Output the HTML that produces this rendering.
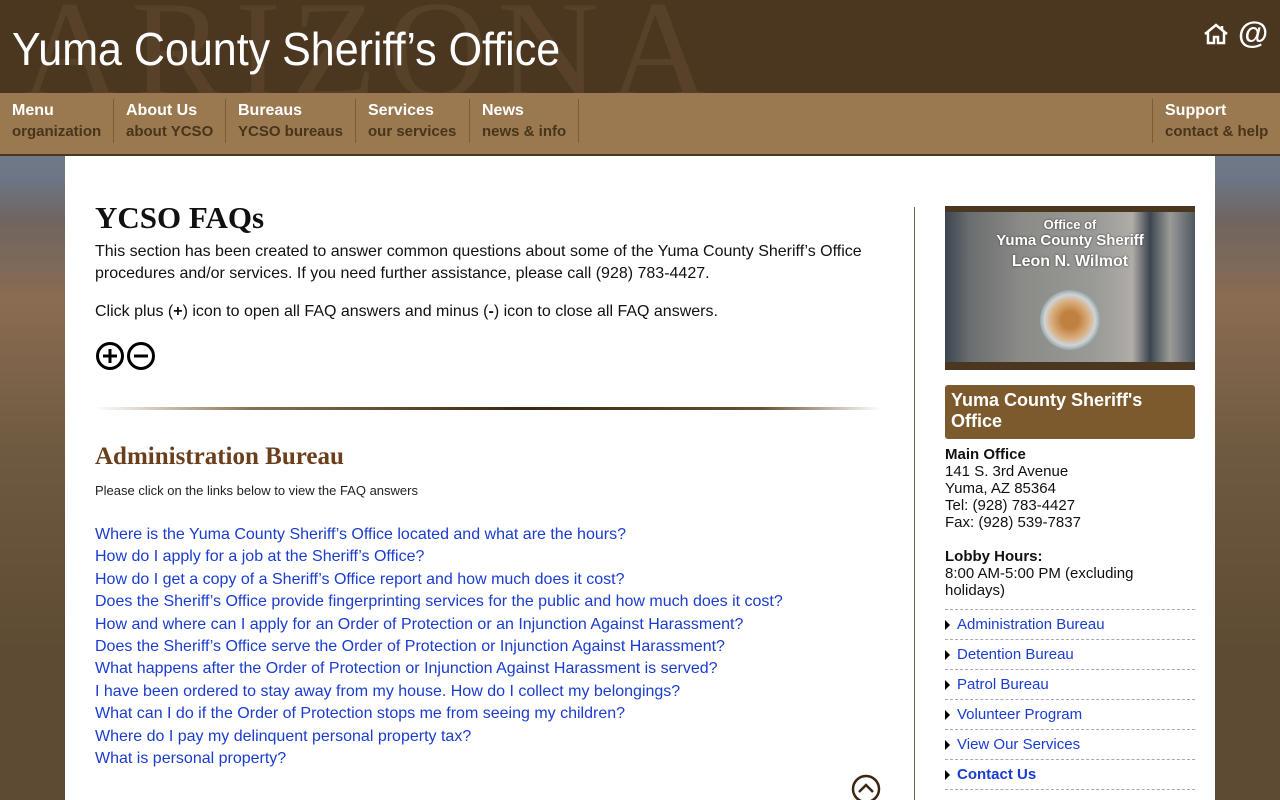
<!DOCTYPE html>
<html><head><meta charset="utf-8"><style>
*{margin:0;padding:0;box-sizing:border-box}
html,body{width:1280px;height:800px;overflow:hidden}
body{font-family:"Liberation Sans",Arial,sans-serif;position:relative;background:linear-gradient(180deg,#7e8a9a 0px,#6d7684 180px,#6f6560 220px,#8a6c52 300px,#6e5a40 450px,#5e4b33 650px)}
.hdr{position:absolute;left:0;top:0;width:1280px;height:93px;background:#4b3620;overflow:hidden}
.az{position:absolute;left:20px;top:-30px;font-family:"Liberation Serif",serif;font-size:140px;color:#574129;letter-spacing:10px}
.ttl{position:absolute;left:12px;top:24px;font-size:43px;color:#fff;transform:scaleY(1.08);transform-origin:left top}
.nav{position:absolute;left:0;top:93px;width:1280px;height:63px;background:#9a7950;border-bottom:2px solid #4b3620}
.ni{position:absolute;top:6px;height:44px;padding-left:12px;border-right:1px solid #7a5c38}
.ni b{display:block;color:#fff;font-size:16px;line-height:21px;margin-top:1px}
.ni span{display:block;color:#3a2812;font-size:15px;line-height:22px;font-weight:bold;opacity:.85}
.main{position:absolute;left:65px;top:156px;width:1150px;height:644px;background:#fff}
.c{position:absolute;left:95px;color:#111;font-size:16px}
a{color:#1a3ccf;text-decoration:none}
.vl{position:absolute;left:914px;top:207px;width:1px;height:593px;background:#7a6450}
.side{position:absolute;left:945px;width:250px;font-size:15px;color:#111}
.li{height:30px;border-bottom:1px dashed #aaa;font-size:15px;line-height:30px;padding-left:12px;position:relative}
.li:before{content:"";position:absolute;left:0;top:10px;border-left:5px solid #000;border-top:5px solid transparent;border-bottom:5px solid transparent}
</style></head><body>
<div class="hdr"><div class="az">ARIZONA</div><div class="ttl">Yuma County Sheriff’s Office</div>
<svg style="position:absolute;left:1203px;top:23px" width="26" height="22" viewBox="0 0 26 22"><path d="M2 11L13 2L24 11M5 9V20H11V14H15V20H21V9M19 3V7" fill="none" stroke="#fff" stroke-width="2.5"/></svg>
<div style="position:absolute;left:1238px;top:15px;color:#fff;font-size:31px;font-weight:bold">@</div></div>
<div class="nav">
<div class="ni" style="left:0;width:114px"><b>Menu</b><span>organization</span></div>
<div class="ni" style="left:114px;width:112px"><b>About Us</b><span>about YCSO</span></div>
<div class="ni" style="left:226px;width:130px"><b>Bureaus</b><span>YCSO bureaus</span></div>
<div class="ni" style="left:356px;width:114px"><b>Services</b><span>our services</span></div>
<div class="ni" style="left:470px;width:109px"><b>News</b><span>news &amp; info</span></div>
<div class="ni" style="left:1152px;width:128px;border-right:none;border-left:1px solid #7a5c38"><b>Support</b><span>contact &amp; help</span></div>
</div>
<div class="main"></div>
<div class="c" style="top:200px;font-family:'Liberation Serif',serif;font-size:31px;color:#111;font-weight:bold">YCSO FAQs</div>
<div class="c" style="top:241px;line-height:22px;width:790px">This section has been created to answer common questions about some of the Yuma County Sheriff’s Office procedures and/or services. If you need further assistance, please call (928) 783-4427.</div>
<div class="c" style="top:303px">Click plus (<b>+</b>) icon to open all FAQ answers and minus (<b>-</b>) icon to close all FAQ answers.</div>
<svg style="position:absolute;left:95px;top:341px" width="62" height="30"><circle cx="15" cy="15" r="12.5" fill="none" stroke="#000" stroke-width="3"/><path d="M8 15H22M15 8V22" stroke="#000" stroke-width="3"/><circle cx="46" cy="15" r="12.5" fill="none" stroke="#000" stroke-width="3"/><path d="M39 15H53" stroke="#000" stroke-width="3"/></svg>
<div style="position:absolute;left:95px;top:407px;width:785px;height:3px;background:linear-gradient(90deg,#fff,#8a7050 20%,#3a2810 55%,#6a5030 85%,#fff)"></div>
<div class="c" style="top:443px;font-family:'Liberation Serif',serif;font-size:25px;color:#6b3e1c;font-weight:bold">Administration Bureau</div>
<div class="c" style="top:483px;font-size:13px;color:#222">Please click on the links below to view the FAQ answers</div>
<div class="c" style="top:524px;line-height:22.4px">
<a>Where is the Yuma County Sheriff’s Office located and what are the hours?</a><br>
<a>How do I apply for a job at the Sheriff’s Office?</a><br>
<a>How do I get a copy of a Sheriff’s Office report and how much does it cost?</a><br>
<a>Does the Sheriff’s Office provide fingerprinting services for the public and how much does it cost?</a><br>
<a>How and where can I apply for an Order of Protection or an Injunction Against Harassment?</a><br>
<a>Does the Sheriff’s Office serve the Order of Protection or Injunction Against Harassment?</a><br>
<a>What happens after the Order of Protection or Injunction Against Harassment is served?</a><br>
<a>I have been ordered to stay away from my house. How do I collect my belongings?</a><br>
<a>What can I do if the Order of Protection stops me from seeing my children?</a><br>
<a>Where do I pay my delinquent personal property tax?</a><br>
<a>What is personal property?</a></div>
<svg style="position:absolute;left:851px;top:774px" width="30" height="30"><circle cx="15" cy="15" r="13" fill="none" stroke="#3a2810" stroke-width="2.5"/><path d="M8 18L15 11L22 18" fill="none" stroke="#3a2810" stroke-width="2.5"/></svg>
<div class="vl"></div>
<div class="side" style="top:206px;height:164px;background:#4b3620;padding:6px 0">
<div style="height:150px;background:linear-gradient(90deg,#3c4650 0,#6a6e70 10%,#8a8a86 30%,#9a9a96 60%,#b0aca8 75%,#3c4650 82%,#9a9a98 90%,#505860);position:relative;text-align:center;color:#fff;font-weight:bold;text-shadow:0 0 2px #333">
<div style="padding-top:5px;font-size:13px">Office of</div><div style="font-size:15px">Yuma County Sheriff</div><div style="font-size:16px;margin-top:4px">Leon N. Wilmot</div>
<div style="position:absolute;left:95px;top:78px;width:60px;height:60px;border-radius:50%;background:radial-gradient(#c08040 20%,#d9b080 45%,#cfd3d8 60%,#9aa 70%,transparent 72%)"></div></div></div>
<div class="side" style="top:385px;height:54px;background:#7d5a2e;border-radius:3px;color:#fff;font-weight:bold;font-size:18px;line-height:21px;padding:5px 6px">Yuma County Sheriff's Office</div>
<div class="side" style="top:446px;line-height:17px"><b>Main Office</b><br>141 S. 3rd Avenue<br>Yuma, AZ 85364<br>Tel: (928) 783-4427<br>Fax: (928) 539-7837<br><br><b>Lobby Hours:</b><br>8:00 AM-5:00 PM (excluding holidays)</div>
<div class="side" style="top:609px;border-top:1px dashed #aaa">
<div class="li"><a>Administration Bureau</a></div>
<div class="li"><a>Detention Bureau</a></div>
<div class="li"><a>Patrol Bureau</a></div>
<div class="li"><a>Volunteer Program</a></div>
<div class="li"><a>View Our Services</a></div>
<div class="li"><a style="font-weight:bold">Contact Us</a></div>
</div>
</body></html>
